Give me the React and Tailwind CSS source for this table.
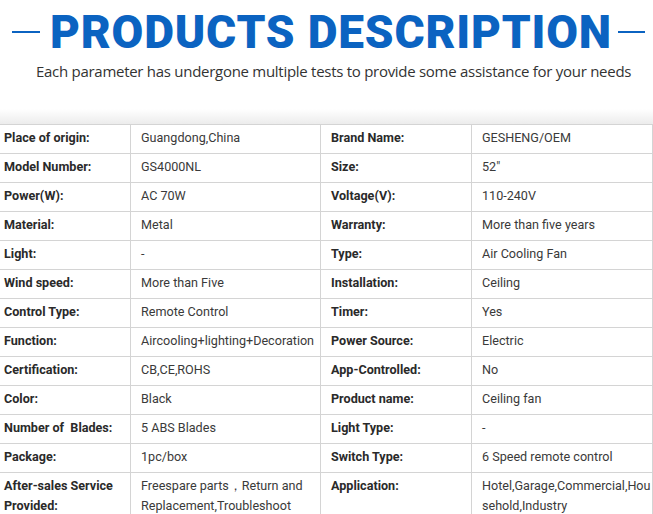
import React from "react";

const rows = [
  ["Place of origin:", "Guangdong,China", "Brand Name:", "GESHENG/OEM"],
  ["Model Number:", "GS4000NL", "Size:", "52\""],
  ["Power(W):", "AC 70W", "Voltage(V):", "110-240V"],
  ["Material:", "Metal", "Warranty:", "More than five years"],
  ["Light:", "-", "Type:", "Air Cooling Fan"],
  ["Wind speed:", "More than Five", "Installation:", "Ceiling"],
  ["Control Type:", "Remote Control", "Timer:", "Yes"],
  ["Function:", "Aircooling+lighting+Decoration", "Power Source:", "Electric"],
  ["Certification:", "CB,CE,ROHS", "App-Controlled:", "No"],
  ["Color:", "Black", "Product name:", "Ceiling fan"],
  ["Number of  Blades:", "5 ABS Blades", "Light Type:", "-"],
  ["Package:", "1pc/box", "Switch Type:", "6 Speed remote control"],
];

function Cell({ children, label, first, tall }) {
  return (
    <div
      className={`border-b border-r border-[#d4d4d4] ${tall ? "pt-[3px] pb-[6px] leading-[20px]" : "h-[29px] flex items-center"} ${first ? "pl-[4px]" : "pl-[10px]"} pr-[2px] ${label ? "font-bold text-[#2a2a2a]" : "text-[#3a3a3a]"} whitespace-pre overflow-hidden`}
    >
      {children}
    </div>
  );
}

export default function App() {
  return (
    <div className="w-[653px] h-[514px] overflow-hidden bg-white" style={{ fontFamily: "Roboto, 'Liberation Sans', sans-serif" }}>
      <div className="flex items-center pt-[7px] h-[56px]">
        <div className="ml-[12px] w-[28px] h-[2px] bg-[#0b63c1]" />
        <div className="ml-[10px] text-[46px] leading-none font-black text-[#0b63c1] tracking-[0.8px]">
          PRODUCTS DESCRIPTION
        </div>
        <div className="ml-[6px] w-[27px] h-[2px] bg-[#0b63c1]" />
      </div>
      <div className="mt-[4px] pl-[36px] text-[15px] text-[#333] tracking-[-0.28px]" style={{ fontFamily: "'Open Sans', sans-serif" }}>
        Each parameter has undergone multiple tests to provide some assistance for your needs
      </div>
      <div className="mt-[26px] h-[15px] bg-gradient-to-b from-white to-[#ececec]" />
      <div className="grid grid-cols-[131px_190px_151px_1fr] border-t border-[#d4d4d4] text-[12.6px]">
        {rows.map((r, i) => (
          <React.Fragment key={i}>
            <Cell label first>{r[0]}</Cell>
            <Cell>{r[1]}</Cell>
            <Cell label>{r[2]}</Cell>
            <Cell>{r[3]}</Cell>
          </React.Fragment>
        ))}
        <Cell label first tall>{"After-sales Service\nProvided:"}</Cell>
        <Cell tall>{"Freespare parts，Return and\nReplacement,Troubleshoot"}</Cell>
        <Cell label tall>Application:</Cell>
        <Cell tall>{"Hotel,Garage,Commercial,Hou\nsehold,Industry"}</Cell>
      </div>
    </div>
  );
}
